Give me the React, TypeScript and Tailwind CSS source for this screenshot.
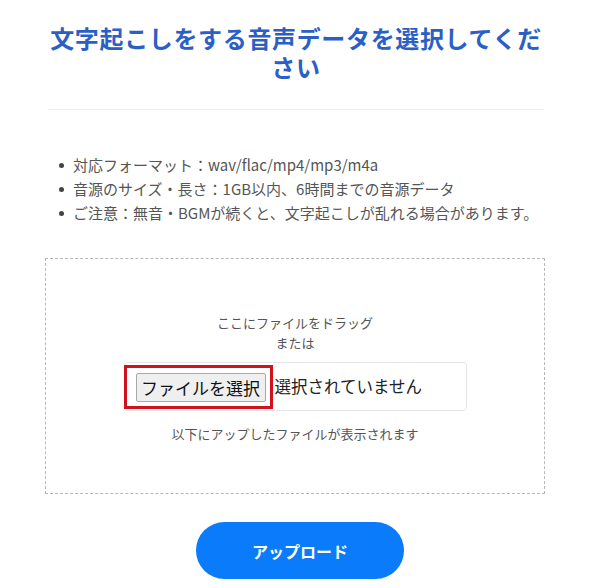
export default function App() {
  const notes = [
    '対応フォーマット：wav/flac/mp4/mp3/m4a',
    '音源のサイズ・長さ：1GB以内、6時間までの音源データ',
    'ご注意：無音・BGMが続くと、文字起こしが乱れる場合があります。',
  ];

  return (
    <div className="w-[600px] h-[588px] bg-white font-['Noto_Sans_CJK_JP',sans-serif] overflow-hidden">
      <div className="ml-[48px] w-[496px] pt-[23px]">
        {/* Title */}
        <h1 className="text-center text-[24px] leading-[29px] font-bold tracking-[0.65px] text-[#2c5fc6]">
          文字起こしをする音声データを選択してください
        </h1>

        <div className="mt-[28px] h-px bg-[#ececec]" />

        {/* Notes */}
        <ul className="mt-[43px] pl-[11px] text-[15px] leading-[24px] text-[#555]">
          {notes.map((n) => (
            <li key={n} className="flex items-center">
              <span className="w-[5px] h-[5px] rounded-full bg-[#444] mr-[9px] shrink-0" />
              <span className="whitespace-nowrap">{n}</span>
            </li>
          ))}
        </ul>
      </div>

      {/* Drop zone */}
      <div className="ml-[45px] mt-[33px] w-[500px] h-[236px] border border-dashed border-[#b8b8b8] flex flex-col items-center pt-[54px]">
        <p className="text-[13px] leading-[20px] text-[#555] text-center">
          ここにファイルをドラッグ
          <br />
          または
        </p>
        <div className="mt-[9px] w-[343px] h-[49px] border border-[#e6e6e6] rounded-[4px] flex items-center">
          <div className="border-[3px] border-[#d0121f] pl-[9px] pr-[4px] pt-[5px] pb-[4px] -ml-px">
            <button className="w-[130px] h-[29px] bg-[#efefef] border border-[#a9a9a9] rounded-[2px] text-[17px] leading-none text-[#111] flex items-center justify-center">
              ファイルを選択
            </button>
          </div>
          <span className="ml-[2px] text-[16.5px] text-[#222]">選択されていません</span>
        </div>
        <p className="mt-[13px] text-[13px] leading-[20px] text-[#555]">以下にアップしたファイルが表示されます</p>
      </div>

      {/* Upload button */}
      <div className="flex justify-center mt-[28px]">
        <button className="w-[208px] h-[57px] rounded-full bg-[#0a7cfb] text-white text-[16px] font-bold">
          アップロード
        </button>
      </div>
    </div>
  );
}
